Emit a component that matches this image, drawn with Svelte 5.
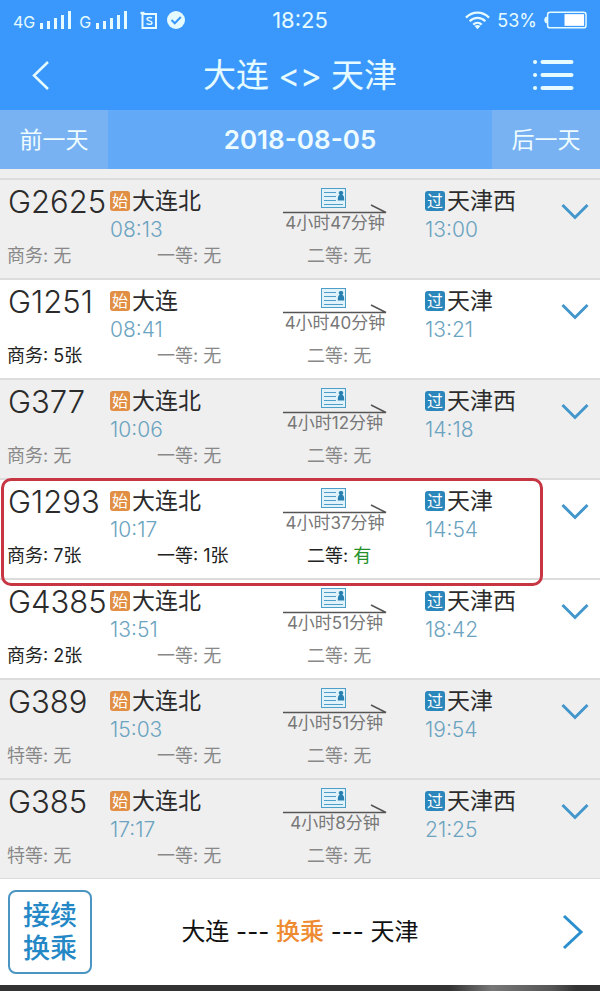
<script>
  const bars = [6, 8, 11, 14, 18];

  let from = '大连';
  let to = '天津';
  let date = '2018-08-05';

  // count: 0 = sold out, a number = tickets left, '有' = plenty
  const trains = [
    { no: 'G2625', from: '大连北', depart: '08:13', to: '天津西', arrive: '13:00', duration: '4小时47分钟', seats: [['商务', 0], ['一等', 0], ['二等', 0]] },
    { no: 'G1251', from: '大连', depart: '08:41', to: '天津', arrive: '13:21', duration: '4小时40分钟', seats: [['商务', 5], ['一等', 0], ['二等', 0]] },
    { no: 'G377', from: '大连北', depart: '10:06', to: '天津西', arrive: '14:18', duration: '4小时12分钟', seats: [['商务', 0], ['一等', 0], ['二等', 0]] },
    { no: 'G1293', from: '大连北', depart: '10:17', to: '天津', arrive: '14:54', duration: '4小时37分钟', seats: [['商务', 7], ['一等', 1], ['二等', '有']], marked: true },
    { no: 'G4385', from: '大连北', depart: '13:51', to: '天津西', arrive: '18:42', duration: '4小时51分钟', seats: [['商务', 2], ['一等', 0], ['二等', 0]] },
    { no: 'G389', from: '大连北', depart: '15:03', to: '天津', arrive: '19:54', duration: '4小时51分钟', seats: [['特等', 0], ['一等', 0], ['二等', 0]] },
    { no: 'G385', from: '大连北', depart: '17:17', to: '天津西', arrive: '21:25', duration: '4小时8分钟', seats: [['特等', 0], ['一等', 0], ['二等', 0]] }
  ];

  function soldOut(train) {
    return train.seats.every(([, count]) => !count);
  }

  function seatText(count) {
    if (!count) return '无';
    return typeof count === 'number' ? `${count}张` : count;
  }
</script>

<div class="app">
  <header>
    <div class="status">
      <div class="status-left">
        <span class="net">4G</span>
        <span class="signal">
          {#each bars as height}<i style="height: {height}px"></i>{/each}
        </span>
        <span class="net second">G</span>
        <span class="signal">
          {#each bars as height}<i style="height: {height}px"></i>{/each}
        </span>
        <svg class="s-icon" width="18" height="19" viewBox="0 0 18 19" fill="none" stroke="currentColor">
          <rect x="2.5" y="3" width="13.5" height="14" stroke-width="2" />
          <path d="M0.5 2h4" stroke-width="2.4" />
          <path d="M12 7.2c-.8-1-5-1.3-5 .9s5 1.4 5 3.6-4.4 2-5.4.7" stroke-width="1.5" />
        </svg>
        <svg width="18" height="18" viewBox="0 0 18 18">
          <circle cx="9" cy="9" r="9" fill="currentColor" />
          <path d="M4.5 9l3.3 3.3 6-6.3" fill="none" stroke="#3a98fc" stroke-width="2" />
        </svg>
      </div>
      <span class="clock">18:25</span>
      <div class="status-right">
        <svg width="25" height="19" viewBox="0 0 26 19" fill="none" stroke="currentColor" stroke-width="2.4">
          <path d="M1 6.5C8-.3 18-.3 25 6.5" />
          <path d="M4.8 10.3c4.8-4.6 11.6-4.6 16.4 0" />
          <path d="M8.6 13.7c2.6-2.4 6.2-2.4 8.8 0" />
          <path d="M10 15.3c1.8-1.5 4.2-1.5 6 0L13 18.5z" fill="currentColor" stroke="none" />
        </svg>
        <span class="percent">53%</span>
        <svg width="43" height="18" viewBox="0 0 44 18">
          <rect x="3.7" y="1" width="39.3" height="16" rx="2.5" fill="none" stroke="currentColor" stroke-width="1.5" />
          <path d="M2.5 6C.3 6 .3 12 2.5 12z" fill="currentColor" stroke="currentColor" />
          <rect x="21" y="3" width="20" height="12" fill="#fff" />
        </svg>
      </div>
    </div>
    <nav>
      <button class="icon-btn" aria-label="返回">
        <svg width="18" height="30" viewBox="0 0 18 30" fill="none" stroke="currentColor" stroke-width="2.5">
          <path d="M16 2L2 15.5 16 29" />
        </svg>
      </button>
      <h1>{from} &lt;&gt; {to}</h1>
      <button class="icon-btn" aria-label="菜单">
        <svg width="42" height="32" viewBox="0 0 42 32" fill="none" stroke="currentColor" stroke-width="4" stroke-linecap="round">
          <path d="M10.5 3h29M10.5 16h29M10.5 29h29M3 3h.1M3 16h.1M3 29h.1" />
        </svg>
      </button>
    </nav>
  </header>

  <div class="dates">
    <button class="day">前一天</button>
    <button class="date">{date}</button>
    <button class="day">后一天</button>
  </div>

  <ul class="trains">
    {#each trains as train}
      <li class="train" class:disabled={soldOut(train)} class:marked={train.marked}>
        <div class="info">
          <span class="no">{train.no}</span>
          <div class="stop">
            <div class="station"><span class="tag start">始</span>{train.from}</div>
            <time>{train.depart}</time>
          </div>
          <div class="ride">
            <svg width="104" height="28" viewBox="0 0 104 28" fill="none">
              <rect x="38.5" y="1.5" width="24" height="19" fill="#e2f2fa" stroke="#4d9fc8" />
              <path d="M41 5.5h12M41 9.5h12M41 13.5h12M41 17.5h19" stroke="#4d9fc8" stroke-width="1.2" />
              <path d="M58 4a2 2 0 0 1 1.3 3.7c1.7.8 1.9 2.6 1.9 5.8h-6.4c0-3.2.2-5 1.9-5.8A2 2 0 0 1 58 4z" fill="#2680b2" />
              <path d="M0 25.5h103L88 18" stroke="#555" stroke-width="1.5" />
            </svg>
            <span>{train.duration}</span>
          </div>
          <div class="stop">
            <div class="station"><span class="tag pass">过</span>{train.to}</div>
            <time>{train.arrive}</time>
          </div>
          <button class="expand" aria-label="展开">
            <svg width="28" height="18" viewBox="0 0 28 18" fill="none" stroke="#4296cc" stroke-width="3">
              <path d="M1.5 2L14 14.5 26.5 2" />
            </svg>
          </button>
        </div>
        <div class="seats">
          {#each train.seats as [name, count]}
            <span class:none={!count}>{name}: <b class:plenty={count === '有'}>{seatText(count)}</b></span>
          {/each}
        </div>
      </li>
    {/each}
  </ul>

  <a class="transfer" href="#transfer">
    <span class="badge">接续<br />换乘</span>
    <span class="route">{from} --- <em>换乘</em> --- {to}</span>
    <svg width="22" height="36" viewBox="0 0 22 36" fill="none" stroke="#2a8fcc" stroke-width="3">
      <path d="M2 2l17 16L2 34" />
    </svg>
  </a>
  <div class="edge"></div>
</div>

<style>
  :global(body) {
    background: #efefef;
  }

  .app {
    font-family: Inter, "Noto Sans CJK SC", sans-serif;
    color: #2b2b2b;
  }

  button {
    padding: 0;
    border: none;
    background: none;
    color: inherit;
    font: inherit;
    cursor: pointer;
  }

  svg {
    display: block;
  }

  header {
    background: #3a98fc;
    color: #e6fbff;
  }

  .status {
    display: grid;
    grid-template-columns: 1fr auto 1fr;
    align-items: center;
    height: 40px;
    padding: 0 13px;
  }

  .status-left,
  .status-right {
    display: flex;
    align-items: center;
  }

  .status-right {
    justify-content: flex-end;
    gap: 7px;
  }

  .net {
    font-size: 16px;
    line-height: 16px;
    padding-top: 4px;
  }

  .net.second {
    margin-left: 8px;
  }

  .signal {
    display: flex;
    align-items: flex-end;
    gap: 4px;
    margin-left: 5px;
  }

  .signal i {
    width: 3px;
    background: currentColor;
  }

  .s-icon {
    margin: 0 9px 0 13px;
  }

  .clock {
    font-size: 22px;
  }

  .percent {
    font-size: 18px;
  }

  nav {
    display: grid;
    grid-template-columns: 42px 1fr 42px;
    align-items: center;
    height: 70px;
    padding: 0 26px 0 32px;
  }

  h1 {
    margin: 0;
    padding-right: 6px;
    font-size: 33px;
    font-weight: 400;
    line-height: 70px;
    text-align: center;
  }

  .dates {
    display: grid;
    grid-template-columns: 18% 1fr 18%;
    height: 59px;
    background: #62aaf8;
    color: #effcff;
  }

  .day {
    padding-bottom: 4px;
    background: #78b2f2;
    font-size: 23px;
  }

  .date {
    font-size: 26px;
    font-weight: 600;
  }

  .trains {
    margin: 0;
    padding: 9px 0 0;
    list-style: none;
  }

  .train {
    position: relative;
    box-sizing: border-box;
    height: 100px;
    border-top: 2px solid #dcdcdc;
    background: #fff;
  }

  .train.disabled {
    background: #efefef;
  }

  /* red frame reaches a little over the next row */
  .train.marked::after {
    content: '';
    position: absolute;
    z-index: 1;
    inset: -2px 57px -8px 1px;
    border: 3px solid #c73543;
    border-radius: 10px;
    pointer-events: none;
  }

  .info {
    display: grid;
    grid-template-columns: 102fr 173fr 142fr 136fr 39fr;
    height: 64px;
    padding-left: 8px;
  }

  .no {
    font-size: 31px;
    font-weight: 300;
    line-height: 44px;
  }

  .stop,
  .ride {
    min-width: 0;
  }

  .station {
    display: flex;
    align-items: center;
    gap: 2px;
    height: 42px;
    font-size: 23px;
    line-height: 36px;
    white-space: nowrap;
  }

  .tag {
    width: 20px;
    border-radius: 3px;
    color: #fff;
    font-size: 16px;
    line-height: 20px;
    text-align: center;
  }

  .tag.start {
    background: #e18f45;
  }

  .tag.pass {
    background: #2a86bb;
  }

  time {
    display: block;
    color: #6ba3c0;
    font-size: 21px;
    font-weight: 300;
    line-height: 16px;
  }

  .ride {
    display: flex;
    flex-direction: column;
    padding-top: 7px;
    color: #777;
    font-size: 17px;
    line-height: 16px;
  }

  .ride span {
    width: 104px;
    text-align: center;
    white-space: nowrap;
  }

  .expand {
    justify-self: start;
  }

  .seats {
    display: grid;
    grid-template-columns: repeat(4, 1fr);
    font-size: 18px;
    line-height: 24px;
  }

  .seats span {
    padding-left: 7px;
    color: #222;
    white-space: nowrap;
  }

  .seats .none {
    color: #888;
  }

  .seats b {
    font-weight: 400;
  }

  .seats .plenty {
    color: #23902a;
  }

  .transfer {
    display: grid;
    grid-template-columns: 84px 1fr 76px;
    align-items: center;
    height: 107px;
    padding: 0 16px 0 8px;
    border-top: 1px solid #dcdcdc;
    box-sizing: border-box;
    background: #fff;
    color: #111;
    text-decoration: none;
  }

  .transfer svg {
    justify-self: end;
  }

  .badge {
    padding: 7px 0;
    border: 2px solid #4b95c2;
    border-radius: 8px;
    color: #2487c6;
    font-size: 27px;
    font-weight: 500;
    line-height: 33px;
    text-align: center;
  }

  .route {
    font-size: 24px;
    line-height: 28px;
    text-align: center;
  }

  .route em {
    color: #ee8a30;
    font-style: normal;
    font-weight: 500;
  }

  .edge {
    height: 6px;
    background: linear-gradient(90deg, #333 75%, #777 82%, #555 92%, #333 96%);
  }
</style>
